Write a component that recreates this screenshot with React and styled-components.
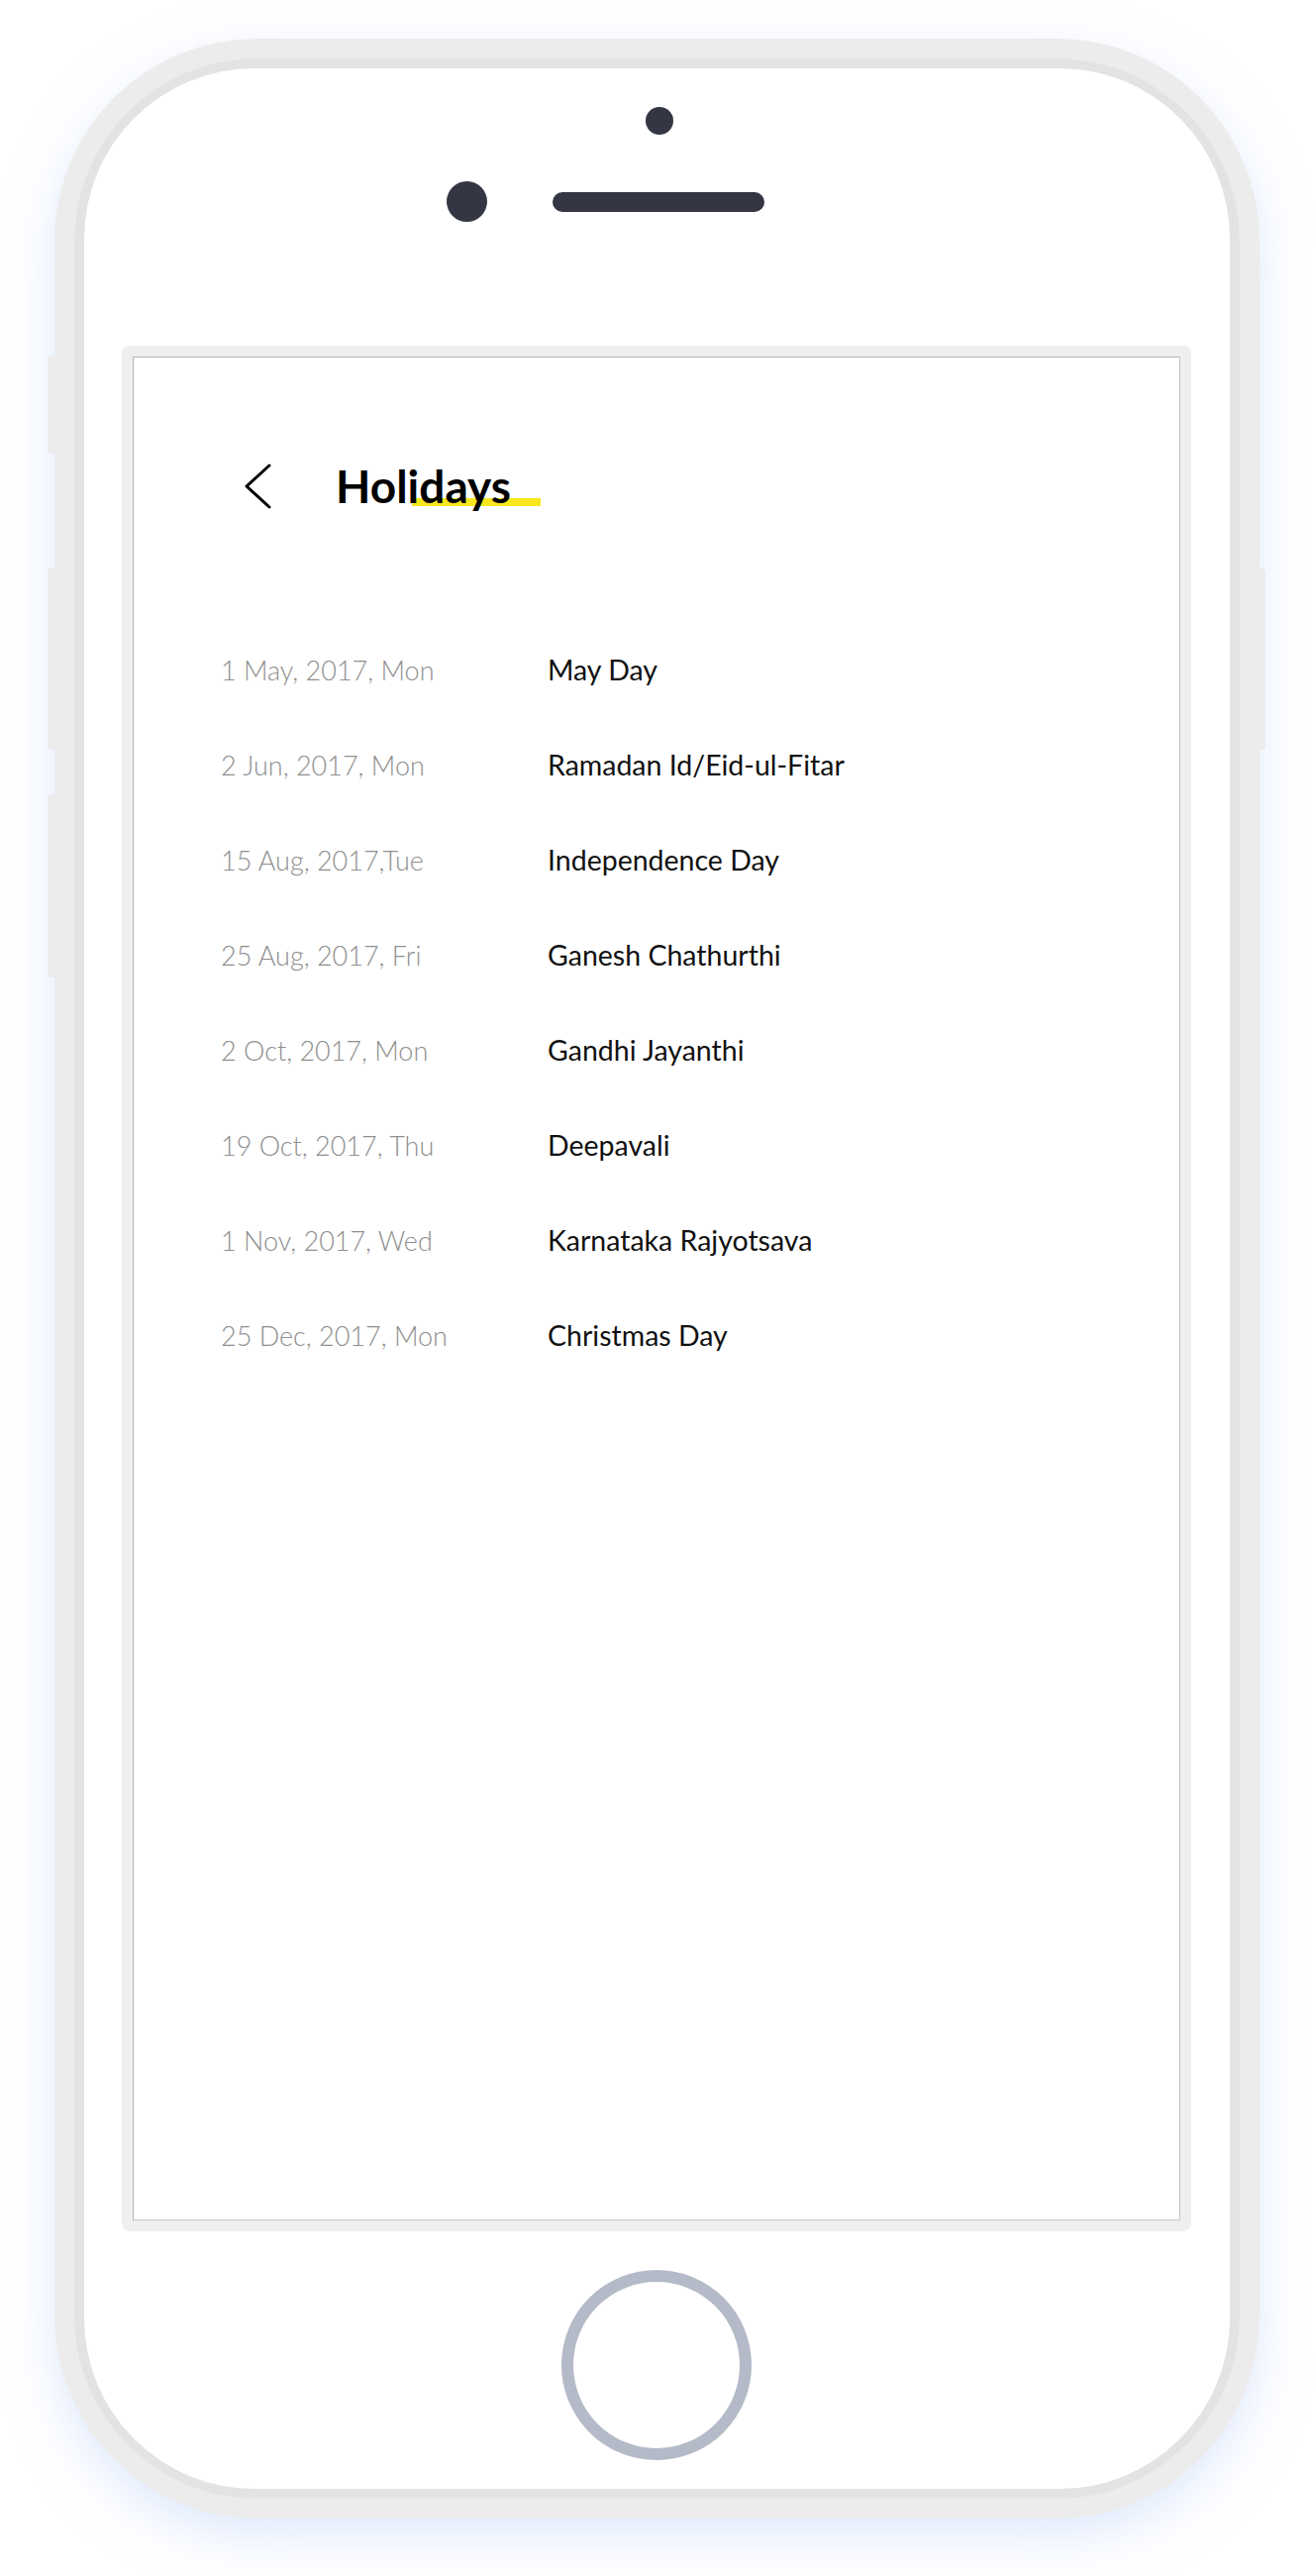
import React from "react";
import styled, { createGlobalStyle } from "styled-components";

const holidays = [
  { date: "1 May, 2017, Mon", name: "May Day" },
  { date: "2 Jun, 2017, Mon", name: "Ramadan Id/Eid-ul-Fitar" },
  { date: "15 Aug, 2017,Tue", name: "Independence Day" },
  { date: "25 Aug, 2017, Fri", name: "Ganesh Chathurthi" },
  { date: "2 Oct, 2017, Mon", name: "Gandhi Jayanthi" },
  { date: "19 Oct, 2017, Thu", name: "Deepavali" },
  { date: "1 Nov, 2017, Wed", name: "Karnataka Rajyotsava" },
  { date: "25 Dec, 2017, Mon", name: "Christmas Day" },
];

const App = () => {
  return (
    <>
      <GlobalStyle />
      <Page>
        <Phone>
          <SideButton side="left" top={320} height={99} />
          <SideButton side="left" top={534} height={184} />
          <SideButton side="left" top={763} height={185} />
          <SideButton side="right" top={535} height={183} />
          <Bezel>
            <Face>
              <Camera />
              <SpeakerRow>
                <Lens />
                <Speaker />
              </SpeakerRow>
              <ScreenFrame>
                <Screen>
                  <Header>
                    <BackButton aria-label="Back">
                      <svg width="30" height="46" viewBox="0 0 30 46">
                        <polyline
                          points="26,2 3,23 26,44"
                          fill="none"
                          stroke="#000"
                          strokeWidth="3"
                          strokeLinecap="round"
                          strokeLinejoin="round"
                        />
                      </svg>
                    </BackButton>
                    <Title>
                      Holidays
                      <Highlight />
                    </Title>
                  </Header>
                  <List>
                    {holidays.map((h) => (
                      <Row key={h.date}>
                        <DateText>{h.date}</DateText>
                        <NameText>{h.name}</NameText>
                      </Row>
                    ))}
                  </List>
                </Screen>
              </ScreenFrame>
              <HomeButton />
            </Face>
          </Bezel>
        </Phone>
      </Page>
    </>
  );
};

const GlobalStyle = createGlobalStyle`
  body {
    margin: 0;
    background: #ffffff;
    font-family: Lato, "Liberation Sans", sans-serif;
  }
`;

const Page = styled.div`
  width: 1326px;
  height: 2601px;
  display: flex;
  justify-content: center;
  padding-top: 39px;
  box-sizing: border-box;
  overflow: hidden;
`;

const Phone = styled.div`
  position: relative;
  width: 1217px;
  height: 2504px;
  box-sizing: border-box;
  padding: 20px;
  border-radius: 205px;
  background: #ececec;
  box-shadow: 0 18px 50px rgba(196, 215, 250, 0.55);
`;

const SideButton = styled.div`
  position: absolute;
  top: ${(p) => p.top}px;
  height: ${(p) => p.height}px;
  width: 7px;
  background: #ececec;
  ${(p) =>
    p.side === "left"
      ? "left: -7px; border-radius: 4px 0 0 4px;"
      : "right: -6px; border-radius: 0 4px 4px 0;"}
`;

const Bezel = styled.div`
  height: 100%;
  box-sizing: border-box;
  padding: 10px;
  border-radius: 185px;
  background: #e3e3e3;
`;

const Face = styled.div`
  height: 100%;
  border-radius: 172px;
  background: #ffffff;
  display: flex;
  flex-direction: column;
  align-items: center;
`;

const Camera = styled.div`
  width: 28px;
  height: 28px;
  border-radius: 50%;
  background: #343743;
  margin-top: 39px;
  margin-left: 6px;
`;

const SpeakerRow = styled.div`
  width: 100%;
  display: grid;
  grid-template-columns: 1fr auto 1fr;
  align-items: center;
  margin-top: 47px;
`;

const Lens = styled.div`
  justify-self: end;
  width: 41px;
  height: 41px;
  border-radius: 50%;
  background: #343743;
  margin-right: 62px;
`;

const Speaker = styled.div`
  width: 214px;
  height: 20px;
  border-radius: 10px;
  background: #343743;
  margin-left: 4px;
`;

const ScreenFrame = styled.div`
  width: 1080px;
  height: 1904px;
  box-sizing: border-box;
  margin-top: 125px;
  padding: 11px;
  border-radius: 8px;
  background: #efefef;
`;

const Screen = styled.div`
  height: 100%;
  box-sizing: border-box;
  background: #ffffff;
  border: 1px solid #b4b4b4;
  border-right-color: #c4c4c4;
  border-bottom-color: #c8c8c8;
  padding: 107px 0 0 88px;
`;

const Header = styled.div`
  display: flex;
  align-items: center;
  padding-left: 23px;
  gap: 63px;
`;

const BackButton = styled.div`
  display: flex;
  width: 30px;
  height: 46px;
`;

const Title = styled.h1`
  position: relative;
  margin: 0;
  font-family: Lato, "Liberation Sans", sans-serif;
  font-weight: 700;
  font-size: 46px;
  line-height: 46px;
  color: #000000;
  z-index: 0;
`;

const Highlight = styled.span`
  position: absolute;
  left: 77px;
  bottom: 3px;
  width: 130px;
  height: 8px;
  background: #f8e71c;
  z-index: -1;
`;

const List = styled.div`
  display: flex;
  flex-direction: column;
  margin-top: 145px;
`;

const Row = styled.div`
  display: grid;
  grid-template-columns: 330px 1fr;
  align-items: baseline;
  height: 96px;
`;

const DateText = styled.span`
  font-size: 27px;
  font-weight: 300;
  color: #8f8f8f;
`;

const NameText = styled.span`
  font-size: 28.5px;
  color: #111111;
`;

const HomeButton = styled.div`
  width: 168px;
  height: 168px;
  border-radius: 50%;
  border: 12px solid #b4bac7;
  margin-top: 39px;
`;

export default App;
